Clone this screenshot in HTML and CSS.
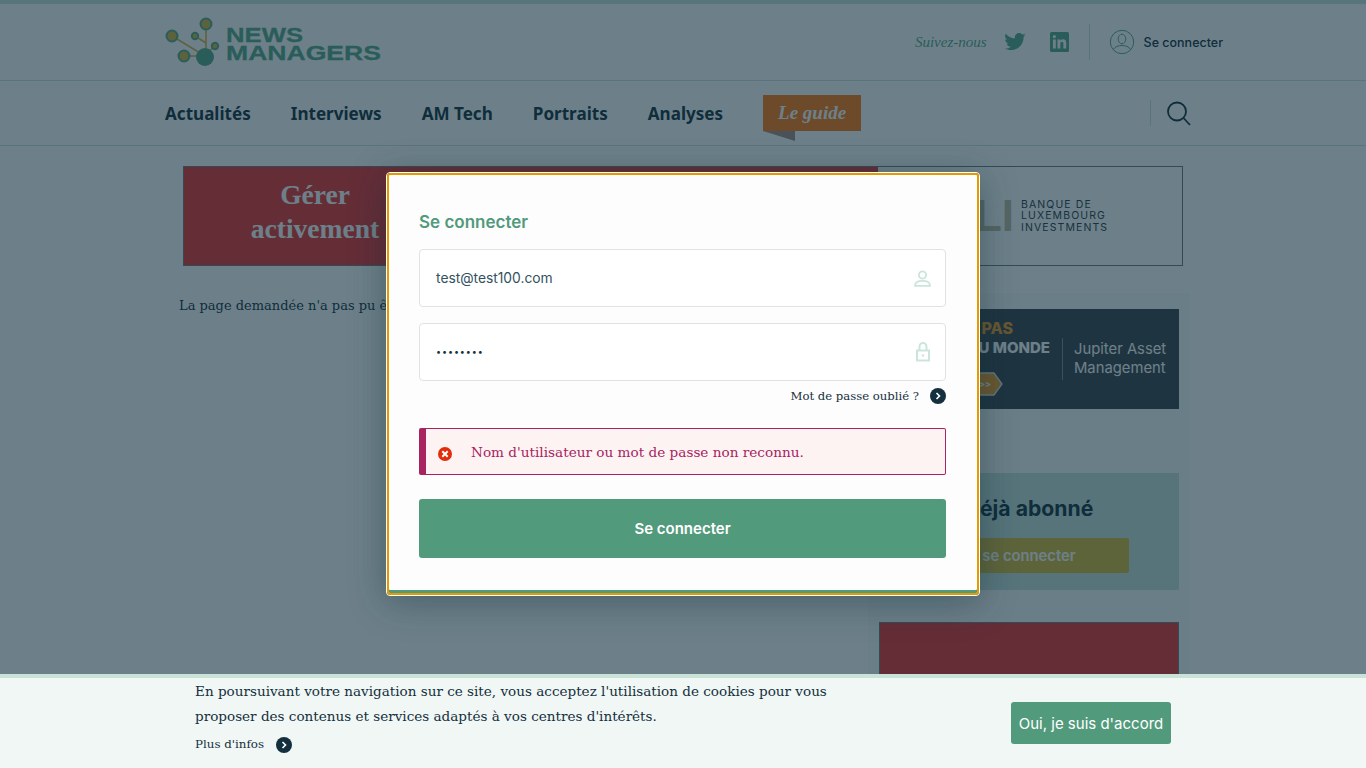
FILE: index.html
```html
<!DOCTYPE html>
<html lang="fr">
<head>
<meta charset="utf-8">
<title>News Managers</title>
<link rel="stylesheet" href="styles.css">
</head>
<body>
<header class="site-head">
  <div class="head-top">
    <a class="logo">
      <svg width="217" height="52" viewBox="0 0 217 52">
        <g stroke="#d9b53f" stroke-width="1.6" fill="none">
          <path d="M7 20 L40 40"/><path d="M19 40 L40 40"/><path d="M41 8 L41 38"/><path d="M30 20 L41 27"/><path d="M50 30 L41 38"/>
        </g>
        <g fill="#d9b53f" stroke="#58a888" stroke-width="2">
          <circle cx="7" cy="20" r="5.500"/><circle cx="41" cy="8" r="5.500"/><circle cx="19" cy="40" r="5.500"/><circle cx="30" cy="20" r="3.200"/><circle cx="50" cy="30" r="3.200"/>
        </g>
        <circle cx="40" cy="41" r="9" fill="#58a888"/>
        <g class="logo-text">
          <text x="61" y="26" textLength="77" lengthAdjust="spacingAndGlyphs">NEWS</text>
          <text x="61" y="44" textLength="155" lengthAdjust="spacingAndGlyphs">MANAGERS</text>
        </g>
      </svg>
    </a>
    <div class="head-right">
      <em class="follow">Suivez-nous</em>
      <svg class="tw" width="22" height="18" viewBox="0 0 24 20"><path fill="#58a888" d="M24 2.400c-.9.400-1.800.700-2.800.800 1-.6 1.800-1.600 2.200-2.700-1 .600-2 1-3.100 1.200C19.300.700 18 0 16.600 0c-2.700 0-4.900 2.200-4.900 4.900 0 .400 0 .800.100 1.100C7.700 5.800 4.100 3.900 1.700.900c-.4.700-.7 1.600-.7 2.500 0 1.700.900 3.200 2.200 4.100-.8 0-1.600-.2-2.200-.6v.100c0 2.400 1.700 4.400 3.900 4.800-.4.100-.8.200-1.300.200-.3 0-.6 0-.9-.1.600 2 2.400 3.400 4.600 3.400-1.700 1.300-3.800 2.100-6.100 2.100-.4 0-.8 0-1.200-.1C2.200 18.200 4.800 19 7.500 19c9.100 0 14-7.500 14-14v-.6c1-.7 1.800-1.500 2.500-2z"/></svg>
      <svg class="li" width="19" height="20" viewBox="0 0 19 20"><rect width="19" height="20" rx="1.500" fill="#58a888"/><g fill="#fff"><rect x="3" y="7.500" width="2.800" height="9"/><circle cx="4.400" cy="4.600" r="1.600"/><path d="M7.500 7.500h2.700v1.300c.5-.9 1.500-1.500 2.800-1.500 2.500 0 3.200 1.600 3.200 4v5.200h-2.800v-4.700c0-1.200-.3-2-1.300-2-1.200 0-1.800.9-1.800 2.100v4.600H7.500z"/></g></svg>
      <span class="v-sep"></span>
      <svg class="user" width="26" height="26" viewBox="0 0 26 26" fill="none" stroke="#58a888" stroke-width="1"><circle cx="13" cy="13" r="11.700"/><ellipse cx="13" cy="10" rx="3.800" ry="4.800"/><path d="M4.500 20.500c1.500-3 5-4 8.500-4s7 1 8.500 4"/></svg>
      <span class="login-link">Se connecter</span>
    </div>
  </div>
  <nav class="head-nav">
    <a>Actualités</a><a>Interviews</a><a>AM Tech</a><a>Portraits</a><a>Analyses</a>
    <a class="guide"><span class="guide-tag">Le guide</span><span class="guide-fold"></span></a>
    <div class="search">
      <svg width="24" height="25" viewBox="0 0 24 25" fill="none" stroke="#14303e" stroke-width="1.800"><circle cx="10" cy="10.500" r="9"/><path d="M16.500 17 L23 24"/></svg>
    </div>
  </nav>
</header>

<main>
  <div class="top-banner">
    <div class="tb-left"><p>Gérer<br>activement</p></div>
    <div class="tb-right">
      <span class="tb-mark">BLI</span>
      <span class="tb-name">BANQUE DE<br>LUXEMBOURG<br>INVESTMENTS</span>
    </div>
  </div>
  <div class="columns">
    <p class="missing">La page demandée n'a pas pu être trouvée.</p>
    <aside class="sidebar">
      <div class="ad-jupiter">
        <div class="adj-left">
          <span class="adj-pas">PAS</span>
          <span class="adj-monde">AU MONDE</span>
          <svg class="adj-btn" width="60" height="24" viewBox="0 0 60 24"><path d="M1 1H51L59 12L51 23H1Z" fill="#f59a23" stroke="#dfe5e5" stroke-width="1.300"/><text x="36" y="15" class="adj-arrows">&gt;&gt;</text></svg>
        </div>
        <div class="adj-right">Jupiter Asset<br>Management</div>
      </div>
      <div class="subscribed">
        <h3>Déjà abonné</h3>
        <a class="yellow-btn">se connecter</a>
      </div>
      <div class="ad-red"></div>
    </aside>
  </div>
</main>

<div class="backdrop">
  <div class="modal">
    <div class="modal-inner">
      <h2>Se connecter</h2>
      <div class="field">
        <input type="text" value="test@test100.com">
        <svg width="17" height="17" viewBox="0 0 17 17" fill="none" stroke="#cbe5db" stroke-width="1.800"><circle cx="8.500" cy="5" r="3.600"/><path d="M1 15.800c0-3.500 3-5 7.500-5s7.500 1.500 7.500 5z"/></svg>
      </div>
      <div class="field pw">
        <input type="password" value="12345678">
        <svg width="14" height="20" viewBox="0 0 14 20" fill="none" stroke="#cbe5db" stroke-width="2"><path d="M3.500 8.500V4.500a3.500 3.500 0 0 1 7 0v4"/><rect x="1" y="8.500" width="12" height="10"/><circle cx="7" cy="13.500" r="1.200" fill="#cbe5db" stroke="none"/></svg>
      </div>
      <div class="forgot">
        <a>Mot de passe oublié ?</a>
        <svg class="go" width="16" height="16" viewBox="0 0 16 16"><circle cx="8" cy="8" r="8" fill="#14303e"/><path d="M6.500 5 L9.500 8 L6.500 11" fill="none" stroke="#fff" stroke-width="1.600"/></svg>
      </div>
      <div class="alert">
        <svg width="14" height="14" viewBox="0 0 14 14"><circle cx="7" cy="7" r="7" fill="#e22d0c"/><path d="M4.300 4.300 L9.700 9.700 M9.700 4.300 L4.300 9.700" stroke="#fff" stroke-width="2"/></svg>
        <span>Nom d'utilisateur ou mot de passe non reconnu.</span>
      </div>
      <button class="submit" type="button">Se connecter</button>
    </div>
  </div>
</div>

<div class="cookie">
  <div class="cookie-text">
    <p>En poursuivant votre navigation sur ce site, vous acceptez l'utilisation de cookies pour vous proposer des contenus et services adaptés à vos centres d'intérêts.</p>
    <div class="more">
      <a>Plus d'infos</a>
      <svg class="go" width="16" height="16" viewBox="0 0 16 16"><circle cx="8" cy="8" r="8" fill="#14303e"/><path d="M6.500 5 L9.500 8 L6.500 11" fill="none" stroke="#fff" stroke-width="1.600"/></svg>
    </div>
  </div>
  <button class="agree" type="button">Oui, je suis d'accord</button>
</div>
</body>
</html>
```
FILE: styles.css
```css
* { box-sizing: border-box; }
html, body { margin: 0; height: 100%; overflow: hidden; }
body { background: #fff; color: #14303e; font-family: "DejaVu Serif", serif; }
p, h2, h3 { margin: 0; }

.site-head { border-top: 4px solid #c9e3d9; }
.head-top {
  height: 77px; display: flex; align-items: center; justify-content: space-between;
  padding: 0 143px 0 165px; border-bottom: 1px solid #c9e3d9;
}
.logo { display: block; height: 52px; }
.logo-text text { font-family: "Liberation Sans", sans-serif; font-weight: 700; font-size: 21px; fill: #58a888; stroke: #58a888; stroke-width: .3px; }
.head-right { display: flex; align-items: center; }
.follow { font-family: "Liberation Serif", serif; font-size: 15px; color: #58a888; }
.tw { margin-left: 17px; }
.li { margin-left: 24px; }
.v-sep { width: 1px; height: 36px; background: #c9e3d9; margin: 0 20px 0 20px; }
.user { margin-right: 9px; margin-left: -1px; }
.login-link { font-family: "Inter", sans-serif; font-size: 12.500px; font-weight: 500; color: #14303e; }

.head-nav {
  height: 65px; display: flex; align-items: center; gap: 40px;
  padding: 0 175px 0 165px; border-bottom: 1px solid #c9e3d9;
  font-family: "Noto Sans", sans-serif; font-weight: 700; font-size: 17.080px;
}
.guide { position: relative; align-self: flex-start; margin-top: 14px; }
.guide-tag {
  display: block; width: 98px; height: 36px; background: #ff7811; color: #fff; text-align: center;
  font: italic 700 19px/36px "Liberation Serif", serif;
}
.guide-fold {
  position: absolute; left: 0; top: 36px; width: 32px; height: 10px;
  background: #a88a85; clip-path: polygon(0 0, 100% 0, 100% 100%);
}
.search {
  margin-left: auto; padding-left: 16px; height: 26px; border-left: 1px solid #c9e3d9;
  display: flex; align-items: center;
}

.top-banner {
  width: 1000px; height: 100px; margin: 20px 0 0 183px; display: flex; border: 1px solid #6f7a7a; background: #fff;
}
.tb-left { width: 694px; background: #eb3234; color: #fff; text-align: center; padding-right: 432px; }
.tb-left p { font: 700 27.500px/34px "Liberation Serif", serif; padding-top: 11px; white-space: nowrap; }
.tb-right { flex: 1; display: flex; align-items: center; padding-left: 58px; }
.tb-mark { font: 700 44px/1 "Liberation Sans", sans-serif; color: #c0bda0; width: 78px; text-align: right; }
.tb-name { font: 400 10.500px/11.500px "Inter", sans-serif; letter-spacing: 1.100px; color: #2b3a42; margin-left: 7px; }

.columns { display: grid; grid-template-columns: 689px 322px; margin: 27px 0 0 179px; }
.missing { font-size: 13px; margin-top: 4px; line-height: 18px; white-space: nowrap; }
.sidebar { background: #f8fafa; padding: 16px 11px 0; height: 475px; overflow: hidden; }
.ad-jupiter { height: 100px; background: #3c434b; display: flex; align-items: center; font-family: "Inter", sans-serif; }
.adj-left { width: 183px; height: 100px; display: flex; flex-direction: column; align-items: flex-end; padding: 10px 12px 0 0; }
.adj-pas { font-size: 16px; font-weight: 800; color: #f59a23; line-height: 18px; margin-right: 37px; }
.adj-monde { font-size: 15px; font-weight: 800; color: #fff; line-height: 22px; }
.adj-btn { margin: 13px 47px 0 0; }
.adj-arrows { font-size: 9px; font-weight: 700; fill: #fff; }
.adj-right { border-left: 1px solid #7a8a92; height: 42px; padding: 2px 0 0 11px; color: #fff; font-size: 14.800px; line-height: 19px; white-space: nowrap; }
.subscribed { height: 117px; margin-top: 64px; background: #c5e0d9; text-align: center; padding-top: 21px; font-family: "Inter", sans-serif; }
.subscribed h3 { font-size: 21.200px; font-weight: 700; line-height: 28px; color: #14303e; }
.yellow-btn {
  display: block; width: 200px; height: 35px; margin: 16px auto 0; background: #d9b93a; border-radius: 2px; color: #fff;
  font-size: 14.800px; font-weight: 600; line-height: 36px;
}
.ad-red { height: 140px; margin-top: 32px; background: #eb3234; border: 1px solid #6f7a7a; }

.backdrop {
  position: fixed; inset: 0; background: rgba(12, 43, 58, .6);
  display: flex; justify-content: center; align-items: flex-start; padding-top: 172px;
}
.modal { width: 594px; height: 424px; border: 1px solid #fff; border-radius: 4px; box-shadow: 0 6px 36px rgba(12, 43, 58, .4); }
.modal-inner {
  height: 100%; border: 2px solid #e59b00; border-radius: 3px; background: #fdfdfd; padding: 33px 31px 0 30px;
  box-shadow: inset 0 -3px 0 #529a7c;
}
h2 { font: 600 17px/28px "Inter", sans-serif; color: #529a7c; margin-bottom: 13px; }
.field {
  height: 58px; display: flex; align-items: center; background: #fff; border: 1px solid #e2e2e2; border-radius: 4px;
  padding: 0 14px 0 16px; margin-bottom: 16px;
}
.field input {
  flex: 1; min-width: 0; border: 0; outline: 0; background: transparent; padding: 0;
  font: 400 13.800px/20px "Inter", sans-serif; color: #33515e;
}
.field.pw { margin-bottom: 6px; }
.field.pw input { color: #14303e; font-size: 9px; letter-spacing: .9px; }
.field.pw svg { margin-right: 1px; }
.forgot { display: flex; justify-content: flex-end; align-items: center; height: 18px; font-size: 11.650px; }
.forgot .go { margin-left: 11px; }
.alert {
  height: 47px; margin-top: 23px; display: flex; align-items: center; background: #fdf3f3; color: #a8235f;
  border: 1px solid #a8235f; border-left-width: 7px; border-radius: 2px; padding-left: 12px; font-size: 13.620px;
}
.alert svg { margin-top: 4px; }
.alert span { margin-left: 19px; }
.submit {
  display: block; width: 100%; height: 59px; margin-top: 24px; border: 0; border-radius: 3px; background: #529a7c; color: #fff;
  font: 600 15px "Inter", sans-serif;
}

.cookie {
  position: fixed; left: 0; right: 0; bottom: 0; height: 94px; background: #f1f7f5; border-top: 4px solid #c9e3d9;
  display: flex; justify-content: space-between; padding: 1px 195px 0;
}
.cookie-text { width: 640px; font-size: 13.560px; line-height: 25px; color: #14303e; }
.more { display: flex; align-items: center; font-size: 11.850px; margin-top: 3px; }
.more .go { margin-left: 12px; }
.agree {
  width: 160px; height: 42px; margin-top: 23px; border: 0; border-radius: 3px; background: #529a7c; color: #fff;
  font: 400 15px "Inter", sans-serif;
}
```
